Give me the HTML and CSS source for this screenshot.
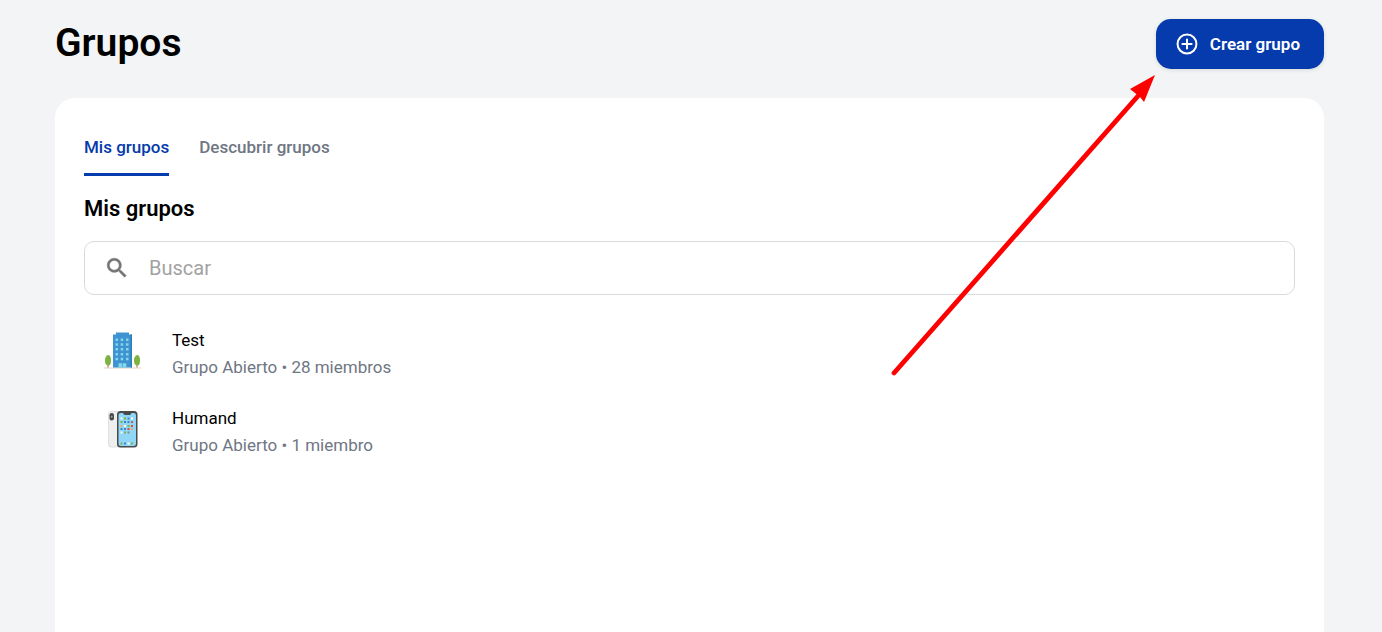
FILE: index.html
```
<!DOCTYPE html>
<html lang="es">

<head>
    <meta charset="UTF-8">
    <meta name="viewport" content="width=device-width, initial-scale=1.0">
    <title>Grupos</title>
    <link rel="stylesheet" href="styles.css">
</head>

<body>
    <header class="page-header">
        <h1>Grupos</h1>
        <div class="create-group">
            <button type="button" class="btn-create">
                <svg class="icon-plus" viewBox="0 0 24 24" aria-hidden="true">
                    <circle cx="12" cy="12" r="10.3" />
                    <path d="M12 7v10M7 12h10" />
                </svg>
                Crear grupo
            </button>
            <svg class="arrow" viewBox="0 0 270 306" aria-hidden="true">
                <path class="arrow-line" d="M8 299 L252 22" />
                <path class="arrow-head" d="M269 1 L244 15 L249 19 L254 23 L258 28 Z" />
            </svg>
        </div>
    </header>

    <main class="card">
        <nav class="tabs">
            <a href="#mis-grupos" class="tab active">Mis grupos</a>
            <a href="#descubrir" class="tab">Descubrir grupos</a>
        </nav>

        <h2 id="mis-grupos">Mis grupos</h2>

        <label class="search-box">
            <svg class="icon-search" viewBox="0 0 24 24" aria-hidden="true">
                <path d="M15.5 14h-.79l-.28-.27C15.41 12.59 16 11.11 16 9.5 16 5.91 13.09 3 9.5 3S3 5.91 3 9.5 5.91 16 9.5 16c1.61 0 3.09-.59 4.23-1.57l.27.28v.79l5 4.99L20.49 19l-4.99-5zm-6 0C7.01 14 5 11.99 5 9.5S7.01 5 9.5 5 14 7.01 14 9.5 11.99 14 9.5 14z" />
            </svg>
            <input type="search" name="buscar" placeholder="Buscar" aria-label="Buscar">
        </label>

        <ul class="group-list">
            <li class="group">
                <svg class="group-icon" viewBox="0 0 40 40" aria-hidden="true">
                    <path fill="#e8d3c4" d="M1 36.500h37v1H1z" />
                    <path fill="#a5694a" d="M4.500 31h1v5.500h-1zM33.500 31h1v5.500h-1z" />
                    <path fill="#7cb342" d="M5 24q3 0 3 5.500T5 34.500 2 29.500 5 24zM34 24q3 0 3 5.500t-3 5-3-5 3-5.500z" />
                    <path fill="#3f93d0" d="M13 1.500h13v2h3v33H10v-33h3z" />
                    <path fill="#317fb9" d="M27.500 3.500H29v33h-1.500z" />
                    <g fill="#80d8e8">
                        <path d="M12.500 7.500h2.500v2.500h-2.500zM17.700 7.500h2.500v2.500h-2.500zM23 7.500h2.500v2.500H23z" />
                        <path d="M12.500 12.300h2.500v2.500h-2.500zM17.700 12.300h2.500v2.500h-2.500zM23 12.300h2.500v2.500H23z" />
                        <path d="M12.500 17.100h2.500v2.500h-2.500zM17.700 17.100h2.500v2.500h-2.500zM23 17.100h2.500v2.500H23z" />
                        <path d="M12.500 21.900h2.500v2.500h-2.500zM17.700 21.900h2.500v2.500h-2.500zM23 21.900h2.500v2.500H23z" />
                        <path d="M12.500 26.700h2.500v2.500h-2.500zM17.700 26.700h2.500v2.500h-2.500zM23 26.700h2.500v2.500H23z" />
                        <path d="M15.500 32.200h3.600v4.300h-3.600zM19.700 32.200h3.600v4.300h-3.600z" />
                    </g>
                </svg>
                <div class="group-info">
                    <h3>Test</h3>
                    <p>Grupo Abierto • 28 miembros</p>
                </div>
            </li>
            <li class="group">
                <svg class="group-icon" viewBox="0 0 40 40" aria-hidden="true">
                    <rect fill="#e0e0e0" x="5" y="2" width="20" height="36.500" rx="3.500" />
                    <rect fill="#eeeeee" x="6" y="3" width="18" height="34.500" rx="3" />
                    <rect fill="#4a4a4a" x="6.500" y="4" width="4.500" height="7.500" rx="2.200" />
                    <circle fill="#9e9e9e" cx="8.700" cy="7.700" r="1" />
                    <rect fill="#4a4a4a" x="14" y="2" width="20.500" height="36.500" rx="3.500" />
                    <path fill="#90d6f7" d="M18 4h2q.5 2 2 2h4.500q1.500 0 2-2h2q2.500 0 2.500 2v28.500q0 2.500-2.500 2.500H18q-2.500 0-2.500-2.500V6q0-2 2.500-2z" />
                    <path fill="#7cb342" d="M21 8.500h2v2h-2zM17.500 12h2v2h-2zM28 12h2v2h-2zM24.500 16h2v2h-2zM21 22.500h2v2h-2zM17.500 33.500h2v2h-2zM28 33.500h2v2h-2z" />
                    <path fill="#ffffff" d="M17.500 8.500h2v2h-2zM28 8.500h2v2h-2zM21 16h2v2h-2zM17.500 22.500h2v2h-2zM24.500 33.500h2v2h-2z" />
                    <path fill="#e8453c" d="M28 12.500h2v1.500h-2zM24.500 19h2v2h-2zM28 16h2v2h-2z" />
                    <path fill="#f0ab55" d="M17.500 16h2v2h-2zM28 19h2v2h-2z" />
                    <path fill="#3d86c6" d="M24.500 8.500h2v2h-2zM21 12h2v2h-2zM24.500 12h2v2h-2zM17.500 19h2v2h-2zM21 19h2v2h-2zM21 33.500h2v2h-2z" />
                    <path fill="#8a8a8a" d="M24.500 22.500h2v2h-2z" />
                </svg>
                <div class="group-info">
                    <h3>Humand</h3>
                    <p>Grupo Abierto • 1 miembro</p>
                </div>
            </li>
        </ul>
    </main>
</body>

</html>
```
FILE: styles.css
```
* {
    box-sizing: border-box;
    margin: 0;
    padding: 0;
}

body {
    display: flex;
    flex-direction: column;
    min-height: 100vh;
    padding: 19px 58px 0 55px;
    background: #f3f4f6;
    color: #000;
    font-family: Roboto, "Liberation Sans", sans-serif;
}

.page-header {
    display: flex;
    justify-content: space-between;
    align-items: flex-start;
    margin-bottom: 29px;
}

.page-header h1 {
    font-size: 39px;
    line-height: 48px;
    font-weight: 600;
}

.create-group {
    position: relative;
}

.btn-create {
    display: flex;
    align-items: center;
    gap: 12px;
    height: 50px;
    padding: 0 24px 0 20px;
    border: none;
    border-radius: 15px;
    background: #053bac;
    color: #fff;
    font-family: inherit;
    font-size: 17px;
    font-weight: 600;
    box-shadow: 0 1px 4px rgba(0, 0, 0, 0.12);
    cursor: pointer;
}

.icon-plus {
    width: 22px;
    height: 22px;
    fill: none;
    stroke: #fff;
    stroke-width: 2.2;
    stroke-linecap: round;
}

.arrow {
    position: absolute;
    top: 55px;
    right: 100%;
    width: 270px;
    height: 306px;
    pointer-events: none;
}

.arrow-line {
    fill: none;
    stroke: #f00;
    stroke-width: 4.8;
    stroke-linecap: round;
}

.arrow-head {
    fill: #f00;
}

.card {
    flex: 1;
    padding: 29px;
    border-radius: 20px 20px 0 0;
    background: #fff;
}

.tabs {
    display: flex;
    gap: 30px;
    margin-bottom: 20px;
}

.tab {
    padding: 8px 0 14px;
    border-bottom: 3px solid transparent;
    color: #6f7683;
    font-size: 17px;
    line-height: 24px;
    font-weight: 500;
    text-decoration: none;
}

.tab.active {
    border-color: #053bac;
    color: #053bac;
}

.card h2 {
    margin-bottom: 19px;
    font-size: 22px;
    line-height: 26px;
    font-weight: 600;
}

.search-box {
    display: flex;
    align-items: center;
    gap: 19px;
    height: 54px;
    padding: 0 19px;
    border: 1px solid #d8dade;
    border-radius: 10px;
}

.icon-search {
    width: 26px;
    height: 26px;
    fill: #757575;
    stroke: #757575;
    stroke-width: 0.5;
}

.search-box input {
    flex: 1;
    border: none;
    outline: none;
    background: none;
    font-family: inherit;
    font-size: 20px;
}

.search-box input::placeholder {
    color: #a2a2a2;
}

.group-list {
    margin-top: 22px;
    list-style: none;
}

.group {
    display: flex;
    align-items: flex-start;
    gap: 29px;
    padding: 10px 19px 14px;
}

.group-icon {
    width: 40px;
    height: 40px;
    margin-top: 4px;
}

.group-info h3 {
    font-size: 17px;
    line-height: 27px;
    font-weight: 400;
}

.group-info p {
    color: #6f7683;
    font-size: 17px;
    line-height: 27px;
}
```
